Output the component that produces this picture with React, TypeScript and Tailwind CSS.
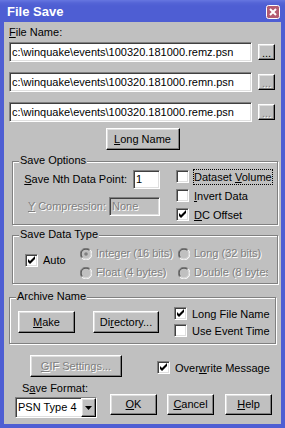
import React from "react";

const raised =
  "bg-[#c0c0c0] border border-t-white border-l-white border-r-black border-b-black shadow-[inset_-1px_-1px_0_#808080,inset_1px_1px_0_#dfdfdf]";
const sunken =
  "border border-t-[#808080] border-l-[#808080] border-r-white border-b-white shadow-[inset_1px_1px_0_#404040,inset_-1px_-1px_0_#dfdfdf]";
const etched = "border border-[#808080] shadow-[inset_1px_1px_0_#fff,1px_1px_0_#fff]";
const dis = "text-[#808080] [text-shadow:1px_1px_0_#fff]";

function Check({ checked }: { checked?: boolean }) {
  return (
    <div className={`relative w-[13px] h-[13px] bg-white shrink-0 ${sunken}`}>
      {checked && (
        <svg className="absolute -left-px -top-px" width="13" height="13" viewBox="0 0 13 13">
          <polygon points="3,5 5,7 10,2 10,5 5,10 3,8" fill="#000" />
        </svg>
      )}
    </div>
  );
}

function CheckRow({
  checked,
  children,
  focus,
  h = "h-[19px]",
}: {
  checked?: boolean;
  children: React.ReactNode;
  focus?: boolean;
  h?: string;
}) {
  return (
    <div className={`flex items-center ${h}`}>
      <Check checked={checked} />
      <span
        className={`ml-[4px] px-0 leading-[14px] whitespace-nowrap border ${
          focus ? "border-dotted border-black" : "border-transparent"
        }`}
      >
        {children}
      </span>
    </div>
  );
}

function Radio({ selected }: { selected?: boolean }) {
  return (
    <svg width="12" height="12" viewBox="0 0 12 12" className="shrink-0">
      <path d="M10.2 1.8 A5.9 5.9 0 0 0 1.8 10.2" stroke="#808080" strokeWidth="1" fill="none" />
      <path d="M1.8 10.2 A5.9 5.9 0 0 0 10.2 1.8" stroke="#ffffff" strokeWidth="1" fill="none" />
      <path d="M9.5 2.5 A4.9 4.9 0 0 0 2.5 9.5" stroke="#404040" strokeWidth="1" fill="none" />
      <path d="M2.5 9.5 A4.9 4.9 0 0 0 9.5 2.5" stroke="#dfdfdf" strokeWidth="1" fill="none" />
      <circle cx="6" cy="6" r="3.8" fill="#c0c0c0" />
      {selected && <circle cx="6" cy="6" r="1.8" fill="#808080" />}
    </svg>
  );
}

function RadioRow({ selected, children }: { selected?: boolean; children: React.ReactNode }) {
  return (
    <div className="flex items-center h-[19px] whitespace-nowrap overflow-hidden">
      <Radio selected={selected} />
      <span className={`ml-[4px] ${dis}`}>{children}</span>
    </div>
  );
}

function Group({
  title,
  className,
  children,
}: {
  title: string;
  className: string;
  children: React.ReactNode;
}) {
  return (
    <div className={`relative ${etched} ${className}`}>
      <span className="absolute -top-[8px] left-[6px] bg-[#c0c0c0] px-[1px] leading-[13px] whitespace-nowrap">
        {title}
      </span>
      {children}
    </div>
  );
}

function FileRow({ text, first, enabled }: { text: string; first?: boolean; enabled?: boolean }) {
  return (
    <div className={`flex items-center ml-[5px] ${first ? "mt-[3px]" : "mt-[10px]"}`}>
      <div
        className={`w-[243px] h-[20px] bg-white ${sunken} flex items-center pl-[2px] whitespace-nowrap overflow-hidden`}
      >
        {text}
      </div>
      <div
        className={`ml-[6px] w-[17px] h-[16px] ${raised} flex items-end justify-center pb-[1px] leading-[9px] text-[11px] ${
          enabled ? "" : dis
        }`}
      >
        ...
      </div>
    </div>
  );
}

export default function App() {
  return (
    <div className="w-[285px] h-[428px] bg-[#4e5ed3] flex flex-col font-['Liberation_Sans',Arial,sans-serif] text-[11px] text-black overflow-hidden">
      {/* Title bar */}
      <div className="h-[22px] flex items-center justify-between bg-[linear-gradient(#6676e0_0px,#5464d6_3px,#4e5ed3_6px,#4e5ed3_100%)]">
        <span className="ml-[7px] text-white font-bold text-[13px] leading-none">File Save</span>
        <svg width="14" height="14" viewBox="0 0 14 14" className="mr-[5px] mt-[2px]">
          <rect x="0.5" y="0.5" width="13" height="13" rx="2" fill="#b35b72" stroke="#ffffff" />
          <path d="M4 4 L10 10 M10 4 L4 10" stroke="#ffffff" strokeWidth="2" />
        </svg>
      </div>

      {/* Client area */}
      <div className="mx-[4px] mb-[4px] flex-1 bg-[#c0c0c0] flex flex-col">
        <div className="mt-[4px] ml-[5px] leading-[13px] h-[13px]">
          <u>F</u>ile Name:
        </div>
        <FileRow first enabled text={"c:\\winquake\\events\\100320.181000.remz.psn"} />
        <FileRow text={"c:\\winquake\\events\\100320.181000.remn.psn"} />
        <FileRow text={"c:\\winquake\\events\\100320.181000.reme.psn"} />

        <div className={`self-center mt-[6px] w-[74px] h-[22px] ${raised} flex items-center justify-center`}>
          <span>
            <u>L</u>ong Name
          </span>
        </div>

        {/* Save Options */}
        <Group title="Save Options" className="mt-[11px] ml-[8px] w-[266px] h-[64px]">
          <div className="flex items-start">
            <div className="ml-[13px] mt-[8px] w-[134px] flex flex-col items-end gap-[8px]">
              <div className="flex items-center h-[19px]">
                <span className="whitespace-nowrap">
                  <u>S</u>ave Nth Data Point:
                </span>
                <div className={`ml-[6px] w-[27px] h-[19px] bg-white ${sunken} flex items-center pl-[2px]`}>1</div>
              </div>
              <div className="flex items-center h-[19px]">
                <span className={`whitespace-nowrap ${dis}`}>
                  <u>Y</u> Compression:
                </span>
                <div className={`ml-[3px] w-[51px] h-[19px] bg-[#c0c0c0] ${sunken} flex items-center pl-[2px] ${dis}`}>
                  None
                </div>
              </div>
            </div>
            <div className="ml-[16px] mt-[5px] flex flex-col">
              <CheckRow focus>
                Dataset <u>V</u>olume
              </CheckRow>
              <CheckRow>
                <u>I</u>nvert Data
              </CheckRow>
              <CheckRow checked>
                <u>D</u>C Offset
              </CheckRow>
            </div>
          </div>
        </Group>

        {/* Save Data Type */}
        <Group title="Save Data Type" className="mt-[10px] ml-[8px] w-[266px] h-[49px]">
          <div className="flex items-start">
            <div className="ml-[12px] mt-[18px] w-[55px] shrink-0 h-[13px] flex items-center">
              <Check checked />
              <span className="ml-[5px] leading-[13px]">Auto</span>
            </div>
            <div className="mt-[8px] w-[188px] grid grid-cols-[98px_90px]">
              <RadioRow selected>Integer (16 bits)</RadioRow>
              <RadioRow>Long (32 bits)</RadioRow>
              <RadioRow>Float (4 bytes)</RadioRow>
              <RadioRow>Double (8 bytes)</RadioRow>
            </div>
          </div>
        </Group>

        {/* Archive Name */}
        <Group title="Archive Name" className="mt-[13px] ml-[5px] w-[267px] h-[47px]">
          <div className="flex items-start">
            <div className={`ml-[8px] mt-[13px] w-[57px] h-[22px] ${raised} flex items-center justify-center`}>
              <span>
                <u>M</u>ake
              </span>
            </div>
            <div className={`ml-[18px] mt-[13px] w-[66px] h-[22px] ${raised} flex items-center justify-center`}>
              <span>
                Di<u>r</u>ectory...
              </span>
            </div>
            <div className="ml-[15px] mt-[7px] flex flex-col">
              <CheckRow checked h="h-[17px]">
                Long File Name
              </CheckRow>
              <CheckRow h="h-[17px]">Use Event Time</CheckRow>
            </div>
          </div>
        </Group>

        {/* GIF + Overwrite */}
        <div className="flex items-start mt-[11px]">
          <div className={`ml-[26px] w-[92px] h-[22px] ${raised} flex items-center justify-center ${dis}`}>
            <span>
              <u>G</u>IF Settings...
            </span>
          </div>
          <div className="ml-[35px] mt-[3px]">
            <CheckRow checked>
              Over<u>w</u>rite Message
            </CheckRow>
          </div>
        </div>

        {/* Save format + buttons */}
        <div className="flex items-start mt-[5px]">
          <div className="ml-[11px] flex flex-col">
            <div className="ml-[7px] leading-[13px] h-[13px]">
              S<u>a</u>ve Format:
            </div>
            <div className={`mt-[2px] w-[82px] h-[21px] bg-white ${sunken} flex items-stretch`}>
              <span className="flex-1 flex items-center pl-[2px] whitespace-nowrap">PSN Type 4</span>
              <div className={`w-[15px] ${raised} flex items-center justify-center`}>
                <svg width="7" height="4" viewBox="0 0 7 4">
                  <polygon points="0,0 7,0 3.5,4" fill="#000" />
                </svg>
              </div>
            </div>
          </div>
          <div className="ml-[13px] mt-[12px] flex">
            <div className={`w-[47px] h-[21px] ${raised} flex items-center justify-center`}>
              <span>
                <u>O</u>K
              </span>
            </div>
            <div className={`ml-[10px] w-[47px] h-[21px] ${raised} flex items-center justify-center`}>
              <span>
                <u>C</u>ancel
              </span>
            </div>
            <div className={`ml-[11px] w-[47px] h-[21px] ${raised} flex items-center justify-center`}>
              <span>
                <u>H</u>elp
              </span>
            </div>
          </div>
        </div>
      </div>
    </div>
  );
}
